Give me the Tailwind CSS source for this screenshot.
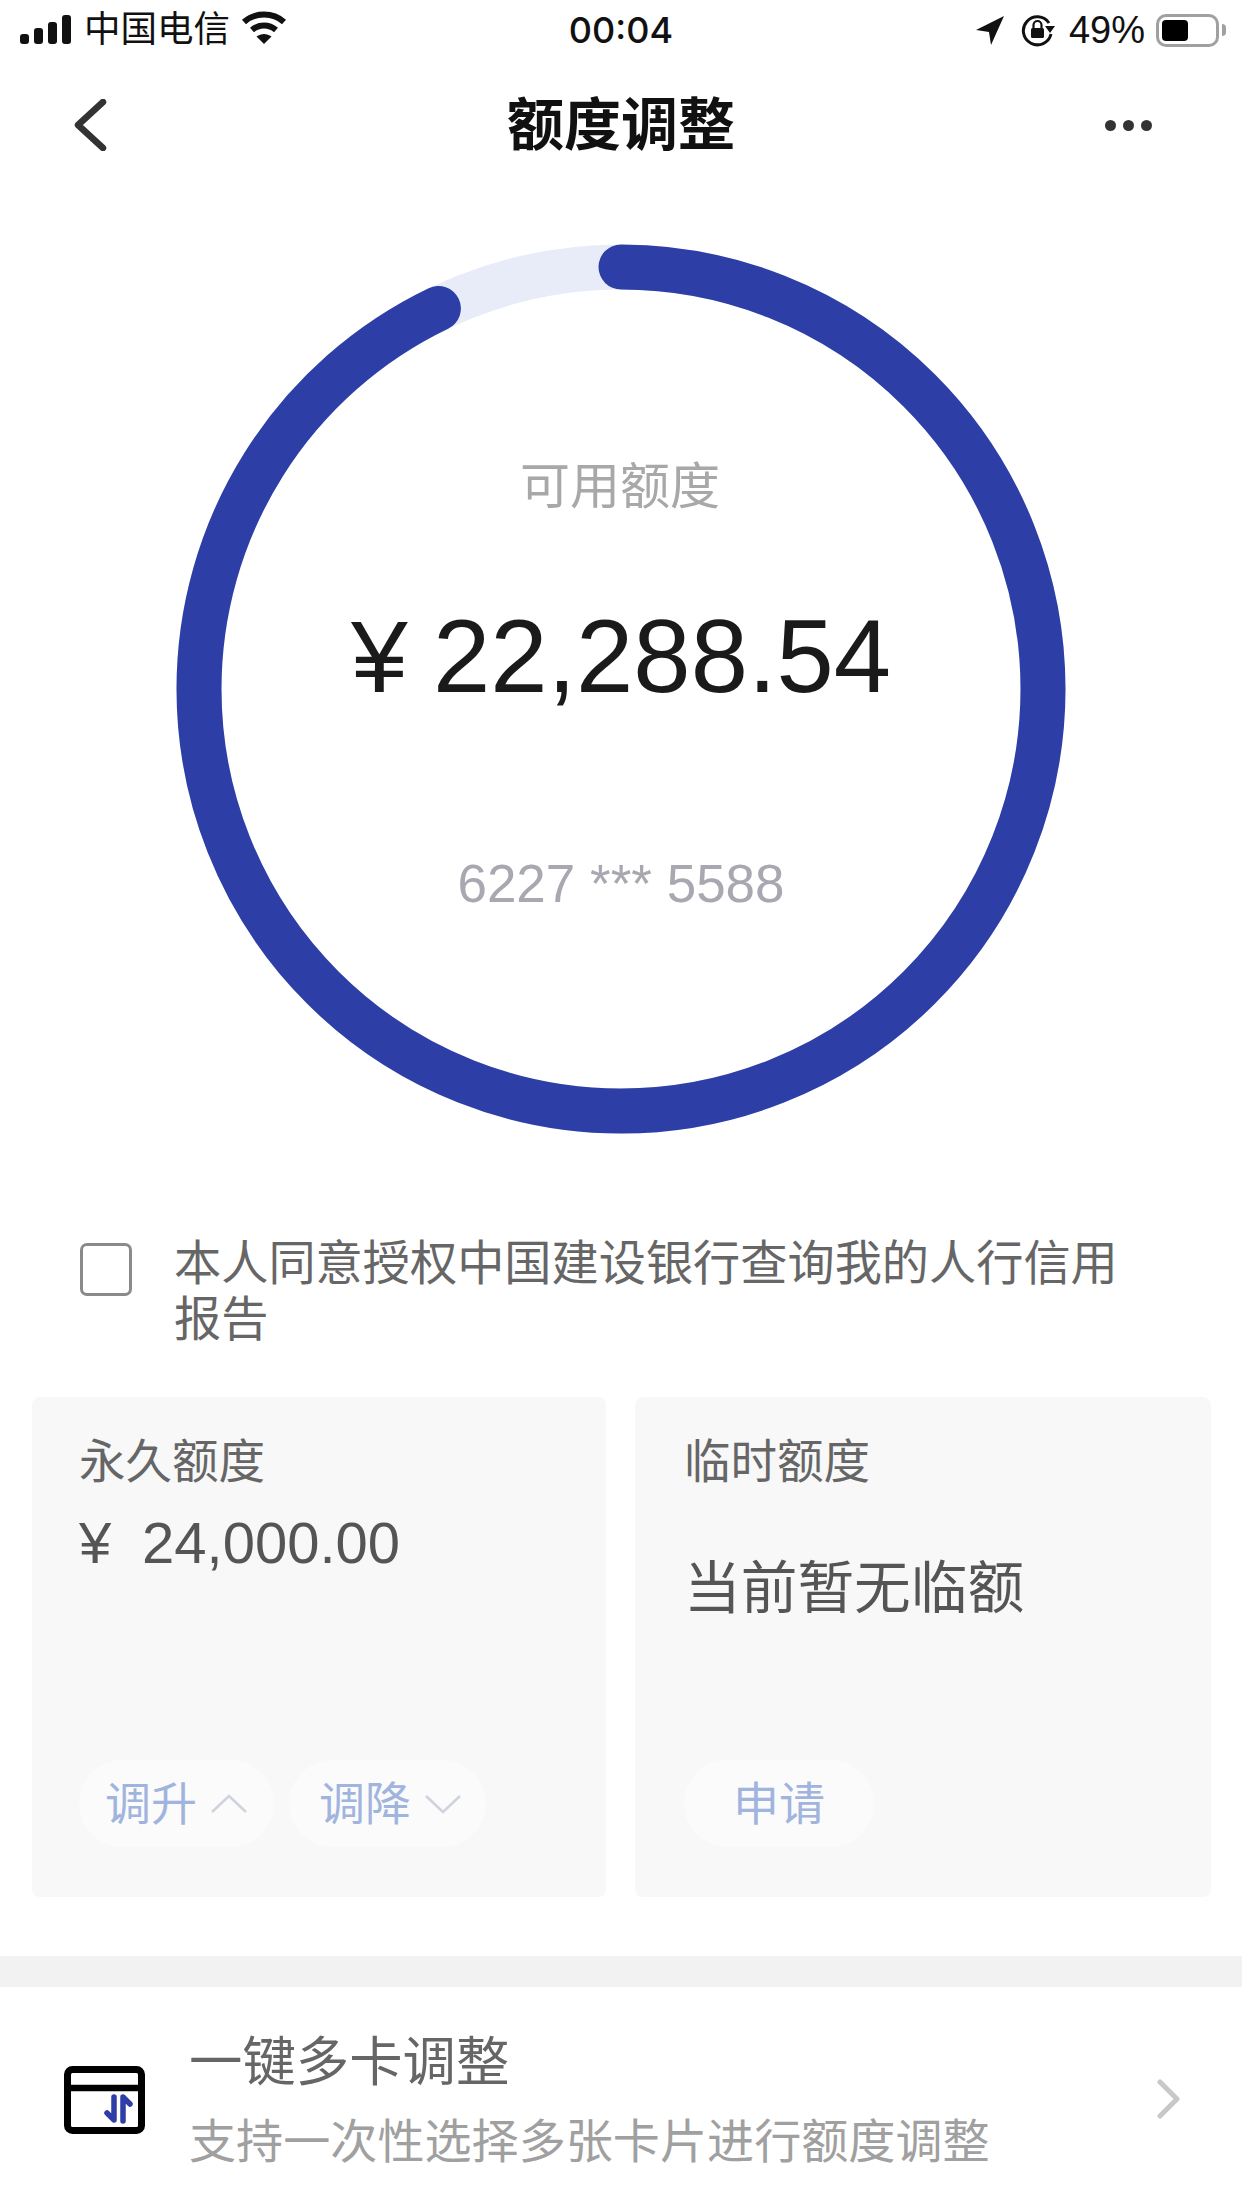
<!DOCTYPE html>
<html lang="zh-CN">
<head>
    <meta charset="UTF-8">
    <meta name="viewport" content="width=device-width, initial-scale=1">
    <script src="https://cdn.jsdelivr.net/npm/@tailwindcss/browser@4"></script>
    <title>额度调整</title>
</head>
<body class="bg-white">
<div class="w-[1242px] h-[2208px] overflow-hidden bg-white font-['Liberation_Sans','Noto_Sans_CJK_SC',sans-serif]">

    <!-- Status bar -->
    <div class="relative flex items-center justify-between h-[60px] pl-[20px] pr-[16px] text-[#111]">
        <div class="flex items-center">
            <svg width="51" height="30" viewBox="0 0 51 30" fill="#111">
                <rect x="0" y="19" width="9" height="10" rx="3"/>
                <rect x="14" y="13" width="9" height="16" rx="3"/>
                <rect x="28" y="7" width="9" height="22" rx="3"/>
                <rect x="42" y="0" width="9" height="29" rx="3"/>
            </svg>
            <span class="ml-[13px] text-[36.5px] leading-[60px]">中国电信</span>
            <svg class="ml-[11px] mb-[4px]" width="46" height="34" viewBox="0 0 46 34" fill="none" stroke="#111" stroke-width="6">
                <path d="M3 11 C14 1 32 1 43 11"/>
                <path d="M11 19 C18 13 28 13 35 19"/>
                <path d="M23 33 L15.5 25.5 C20 22 26 22 30.5 25.5 Z" fill="#111" stroke="none"/>
            </svg>
        </div>
        <span class="absolute left-0 right-0 text-center font-['Inter',sans-serif] text-[36px] leading-[60px] font-medium">00:04</span>
        <div class="flex items-center">
            <svg width="28" height="30" viewBox="0 0 28 30" fill="#111">
                <path d="M28 1 L0 15 L13 17 L15 30 Z"/>
            </svg>
            <svg class="ml-[17px]" width="34" height="34" viewBox="0 0 34 34" fill="none">
                <path d="M28 10 A14 14 0 1 0 30 21" stroke="#111" stroke-width="3"/>
                <path d="M24 13 L34 13 L29 20 Z" fill="#111"/>
                <rect x="10" y="15" width="13" height="10" rx="1.5" fill="#111"/>
                <path d="M12.5 15 V12 A4 4 0 0 1 20.5 12 V15" stroke="#111" stroke-width="2.2"/>
            </svg>
            <span class="ml-[14px] text-[38px] leading-[60px]">49%</span>
            <div class="ml-[11px] flex items-center">
                <div class="w-[63px] h-[33px] rounded-[10px] border-[3px] border-[#a0a0a0] p-[3px]">
                    <div class="w-[26px] h-full rounded-[4px] bg-black"></div>
                </div>
                <div class="ml-[3px] w-[4px] h-[12px] rounded-r-full bg-[#a0a0a0]"></div>
            </div>
        </div>
    </div>

    <!-- Nav bar -->
    <div class="relative flex items-center justify-between h-[130px] pl-[73px] pr-[90px]">
        <svg width="34" height="52" viewBox="0 0 34 52" fill="none" stroke="#333" stroke-width="6.5" stroke-linecap="round" stroke-linejoin="round">
            <path d="M30 3 L5 26 L30 49"/>
        </svg>
        <h1 class="absolute left-0 right-0 text-center text-[57px] leading-[130px] font-bold text-[#111]">额度调整</h1>
        <div class="flex gap-[7px]">
            <div class="w-[11px] h-[11px] rounded-full bg-[#333]"></div>
            <div class="w-[11px] h-[11px] rounded-full bg-[#333]"></div>
            <div class="w-[11px] h-[11px] rounded-full bg-[#333]"></div>
        </div>
    </div>

    <!-- Limit ring -->
    <div class="relative w-[890px] h-[890px] mx-auto mt-[54px]">
        <svg class="block -rotate-90" width="890" height="890" viewBox="0 0 890 890" fill="none">
            <circle cx="445" cy="445" r="422" stroke="#e8ebf8" stroke-width="45"/>
            <circle cx="445" cy="445" r="422" stroke="#2d3ea6" stroke-width="45" stroke-linecap="round" stroke-dasharray="2462 2651"/>
        </svg>
        <div class="absolute inset-0 flex flex-col items-center pt-[213px]">
            <span class="-ml-[2px] text-[50px] leading-[60px] text-[#a8a8a8]">可用额度</span>
            <div class="flex items-baseline mt-[85px] leading-[110px] text-[#1a1a1a]">
                <span class="w-[82px] text-[102px]">¥</span><span class="text-[103px]">22,288.54</span>
            </div>
            <span class="mt-[142px] text-[53px] leading-[60px] text-[#a8a8b0]">6227 *** 5588</span>
        </div>
    </div>

    <!-- Credit report agreement -->
    <div class="flex items-start mt-[102px] pl-[80px]">
        <div class="w-[52px] h-[53px] mt-[7px] shrink-0 rounded-[7px] border-[3px] border-[#8a8a8a]"></div>
        <p class="ml-[42px] w-[960px] text-[47.2px] leading-[56px] text-[#666]">本人同意授权中国建设银行查询我的人行信用报告</p>
    </div>

    <!-- Limit cards -->
    <div class="grid grid-cols-[574px_576px] gap-[29px] mt-[49px] mx-[32px]">
        <div class="flex flex-col h-[500px] rounded-[8px] bg-[#f8f8f8] pt-[35px] pb-[50px] pl-[47px]">
            <span class="text-[46.5px] leading-[60px] text-[#666]">永久额度</span>
            <div class="flex items-center mt-[16px] h-[70px] text-[58px] leading-[70px] text-[#555]">
                <span class="w-[63px]">¥</span><span>24,000.00</span>
            </div>
            <div class="flex gap-[15px] mt-auto">
                <div class="flex items-center w-[195px] h-[87px] pl-[26px] rounded-full bg-[#fbfbfb]">
                    <span class="text-[46px] leading-[60px] text-[#a0b4de]">调升</span>
                    <svg class="ml-[14px]" width="36" height="20" viewBox="0 0 36 20" fill="none" stroke="#ced3de" stroke-width="2.5">
                        <path d="M1 18 L18 2 L35 18"/>
                    </svg>
                </div>
                <div class="flex items-center w-[197px] h-[87px] pl-[30px] rounded-full bg-[#fbfbfb]">
                    <span class="text-[46px] leading-[60px] text-[#a0b4de]">调降</span>
                    <svg class="ml-[14px]" width="36" height="20" viewBox="0 0 36 20" fill="none" stroke="#ced3de" stroke-width="2.5">
                        <path d="M1 2 L18 18 L35 2"/>
                    </svg>
                </div>
            </div>
        </div>
        <div class="flex flex-col h-[500px] rounded-[8px] bg-[#f8f8f8] pt-[35px] pb-[50px] pl-[49px]">
            <span class="text-[46.5px] leading-[60px] text-[#666]">临时额度</span>
            <span class="mt-[62px] text-[56.7px] leading-[70px] text-[#555]">当前暂无临额</span>
            <div class="flex items-center justify-center w-[190px] h-[87px] mt-auto rounded-full bg-[#fbfbfb]">
                <span class="text-[46px] leading-[60px] text-[#a0b4de]">申请</span>
            </div>
        </div>
    </div>

    <div class="h-[31px] mt-[59px] bg-[#f2f2f2]"></div>

    <!-- Multi-card adjustment row -->
    <div class="flex items-start pt-[43px] pl-[64px] pr-[62px]">
        <svg class="mt-[36px] shrink-0" width="81" height="68" viewBox="0 0 81 68" fill="none" stroke-linecap="round" stroke-linejoin="round">
            <rect x="3.5" y="3.5" width="74" height="61" rx="5" stroke="#000" stroke-width="7"/>
            <path d="M3.5 22 H77.5" stroke="#000" stroke-width="6.5"/>
            <path d="M50 31 V54 L43 47" stroke="#2d3ea6" stroke-width="5.5"/>
            <path d="M59 55 V31 L66 38" stroke="#2d3ea6" stroke-width="5.5"/>
        </svg>
        <div class="ml-[45px] flex flex-col">
            <span class="-ml-[1px] text-[53.4px] leading-[66px] text-[#666]">一键多卡调整</span>
            <span class="-ml-[1px] mt-[16px] text-[47.1px] leading-[60px] text-[#a0a0a0]">支持一次性选择多张卡片进行额度调整</span>
        </div>
        <svg class="ml-auto mt-[49px] shrink-0" width="23" height="40" viewBox="0 0 23 40" fill="none" stroke="#c8c8c8" stroke-width="5" stroke-linecap="round" stroke-linejoin="round">
            <path d="M3 3 L20 20 L3 37"/>
        </svg>
    </div>
</div>
</body>
</html>
